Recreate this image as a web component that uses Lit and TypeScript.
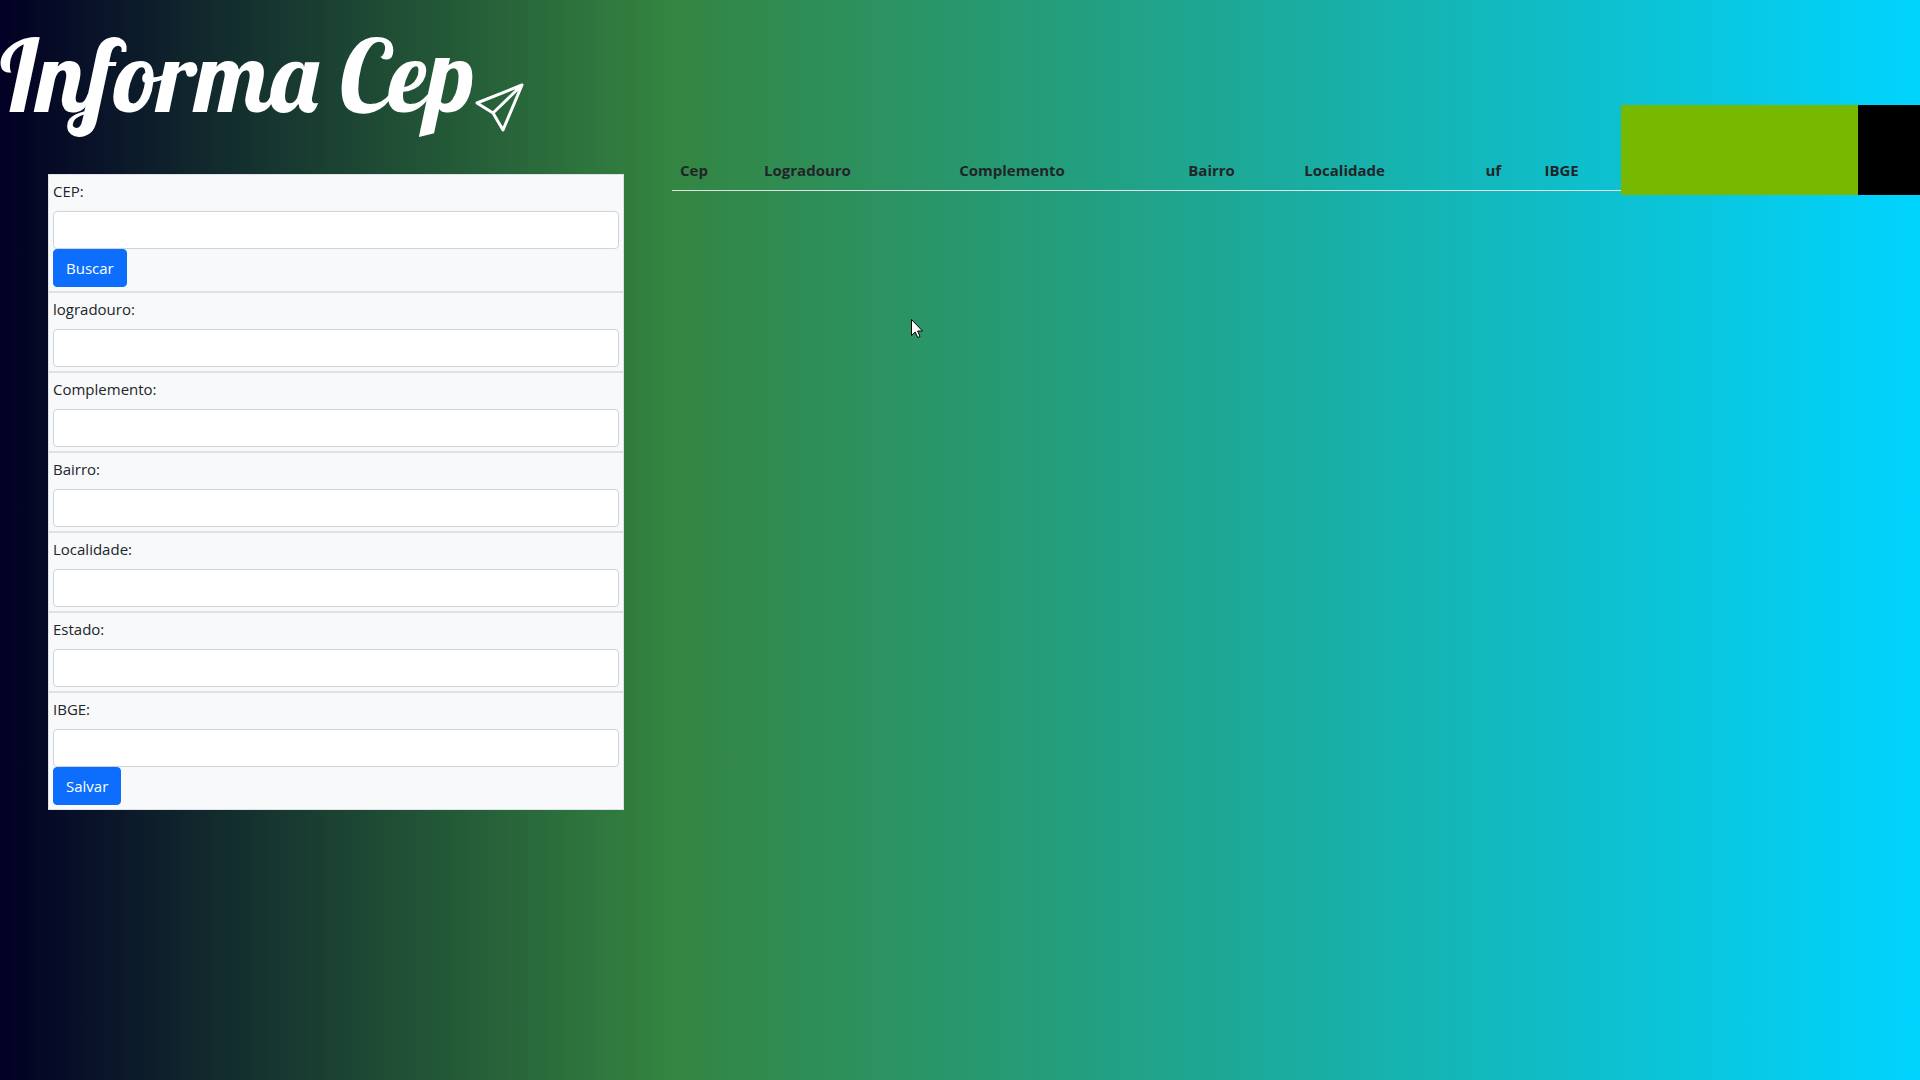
import { LitElement, html, css, nothing } from "lit";
import { customElement } from "lit/decorators.js";

interface Field {
  id: string;
  label: string;
  action?: string;
}

const FIELDS: Field[] = [
  { id: "cep", label: "CEP:", action: "Buscar" },
  { id: "logradouro", label: "logradouro:" },
  { id: "complemento", label: "Complemento:" },
  { id: "bairro", label: "Bairro:" },
  { id: "localidade", label: "Localidade:" },
  { id: "estado", label: "Estado:" },
  { id: "ibge", label: "IBGE:", action: "Salvar" },
];

const COLUMNS = [
  { name: "Cep", share: 84 },
  { name: "Logradouro", share: 195 },
  { name: "Complemento", share: 229 },
  { name: "Bairro", share: 116 },
  { name: "Localidade", share: 181 },
  { name: "uf", share: 59 },
  { name: "IBGE", share: 84 },
];
const TOTAL = COLUMNS.reduce((sum, c) => sum + c.share, 0);

@customElement("app-root")
export class AppRoot extends LitElement {
  static styles = css`
    :host {
      display: block;
      font-family: "Segoe UI", "Open Sans", "Noto Sans", sans-serif;
      font-size: 15px;
      line-height: 24px;
      color: #212529;
    }
    * {
      box-sizing: border-box;
    }
    .page {
      display: flex;
      align-items: flex-start;
      min-height: 100vh;
      background: linear-gradient(90deg, #020024 0%, #348541 35%, #00d4ff 100%);
    }
    .side {
      flex: 0 0 35%;
      min-width: 0;
    }
    .logo {
      display: flex;
      align-items: flex-end;
      height: 174px;
      padding-bottom: 42px;
      color: #fff;
    }
    .logo h1 {
      margin: 0 0 17px;
      font: normal 100px/80px "Lobster", "Liberation Serif", serif;
      white-space: nowrap;
    }
    .plane {
      flex: none;
      width: 50px;
      height: 50px;
    }
    .form {
      margin: 0 48px;
    }
    .group {
      padding: 4px;
      border: 1px solid #dee2e6;
      background: #f8f9fa;
    }
    label {
      display: block;
      margin-bottom: 8px;
    }
    input {
      display: block;
      width: 100%;
      height: 38px;
      padding: 6px 12px;
      border: 1px solid #ced4da;
      border-radius: 4px;
      background: #fff;
      color: inherit;
      font: inherit;
    }
    button {
      display: block;
      height: 38px;
      padding: 6px 12px;
      border: 1px solid #0d6efd;
      border-radius: 4px;
      background: #0d6efd;
      color: #fff;
      font: inherit;
    }
    .results {
      display: flex;
      flex: 1;
      min-width: 0;
      padding-top: 105px;
    }
    .list {
      flex: 1;
      min-width: 0;
      padding-top: 45px;
    }
    table {
      width: 100%;
      table-layout: fixed;
      border-collapse: collapse;
    }
    th {
      padding: 8px;
      border-bottom: 1px solid #dee2e6;
      font-weight: bold;
      text-align: left;
    }
    .green {
      flex: 0 0 19%;
      height: 90px;
      background: #76b900;
    }
    .black {
      flex: 0 0 5%;
      height: 90px;
      background: #000;
    }
    .pointer {
      position: absolute;
      left: 911px;
      top: 319px;
      width: 12px;
      height: 19px;
    }
  `;

  render() {
    return html`
      <main class="page">
        <section class="side">
          <header class="logo">
            <h1>Informa Cep</h1>
            <svg class="plane" viewBox="0 0 50 50" fill="none" stroke="#fff"
              stroke-width="3" stroke-linejoin="round" stroke-linecap="round" aria-hidden="true">
              <path d="M47 3 2 21 18 31 28 48Z M47 3 18 31" />
            </svg>
          </header>
          <form class="form" @submit=${(e: Event) => e.preventDefault()}>
            ${FIELDS.map(
              (f) => html`
                <div class="group">
                  <label for=${f.id}>${f.label}</label>
                  <input id=${f.id} type="text" />
                  ${f.action ? html`<button type="submit">${f.action}</button>` : nothing}
                </div>
              `
            )}
          </form>
        </section>
        <section class="results">
          <div class="list">
            <table>
              <thead>
                <tr>
                  ${COLUMNS.map(
                    (c) => html`<th scope="col" style="width:${(c.share / TOTAL) * 100}%">${c.name}</th>`
                  )}
                </tr>
              </thead>
            </table>
          </div>
          <div class="green"></div>
          <div class="black"></div>
        </section>
      </main>
      <svg class="pointer" viewBox="0 0 12 19" aria-hidden="true">
        <path d="M.5 .5V16.5L4.2 13 6.7 18.5 9 17.5 6.6 12H11.5Z" fill="#fff" stroke="#000" />
      </svg>
    `;
  }
}
